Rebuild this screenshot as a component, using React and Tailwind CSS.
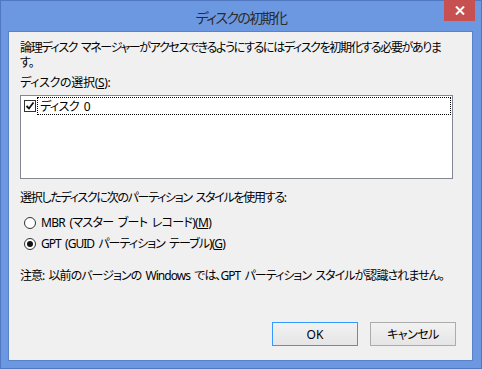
import React from "react";

const font = "font-['Noto_Sans','Noto_Sans_CJK_JP',sans-serif] [font-feature-settings:'palt']";

function Radio({ checked }) {
  return (
    <span className="w-[12px] h-[12px] rounded-full border border-[#333] bg-white flex items-center justify-center shrink-0">
      {checked && <span className="w-[6px] h-[6px] rounded-full bg-[#111]" />}
    </span>
  );
}

export default function App() {
  return (
    <div className={`w-[482px] h-[369px] bg-[#6b98e0] border border-[#4f78c0] flex flex-col ${font} text-[12px] text-black`}>
      <div className="relative h-[30px] flex items-center justify-center shrink-0">
        <span className="text-[14px] tracking-[-1.6px] text-[#2b2b2b] pt-[3px]">ディスクの初期化</span>
        <button className="absolute top-[-1px] right-[6px] w-[31px] h-[21px] bg-[#c75050] flex items-center justify-center">
          <svg width="10" height="9" viewBox="0 0 10 9">
            <path d="M1 0.5 L9 8.5 M9 0.5 L1 8.5" stroke="white" strokeWidth="2" />
          </svg>
        </button>
      </div>
      <div className="ml-[7px] mr-[8px] mb-[7px] flex-1 bg-[#f0f0f0] border border-[#5a82c8] flex flex-col pl-[11px] pr-[15px] pt-[8px] leading-[15px] whitespace-nowrap [word-spacing:2px]">
        <p className="tracking-[-1.35px]">論理ディスク マネージャーがアクセスできるようにするにはディスクを初期化する必要がありま</p>
        <p className="tracking-[-1px]">す。</p>
        <p className="mt-[5px] tracking-[-0.3px]">
          ディスクの選択(<span className="underline">S</span>):
        </p>
        <div className="mt-[5px] w-[433px] h-[84px] bg-white border border-[#828790] p-[1px] shrink-0">
          <div className="h-[18px] flex items-center">
            <span className="ml-[2px] w-[12px] h-[12px] border border-[#333] bg-white flex items-center justify-center shrink-0">
              <svg width="10" height="10" viewBox="0 0 10 10">
                <path d="M1.5 5 L4 7.5 L8.5 1.5" stroke="#111" strokeWidth="1.8" fill="none" />
              </svg>
            </span>
            <span className="ml-[1px] flex-1 h-[18px] border border-dotted border-black flex items-center pl-[2px] tracking-[-0.5px]">
              ディスク 0
            </span>
          </div>
        </div>
        <p className="mt-[11px] tracking-[-1.3px]">選択したディスクに次のパーティション スタイルを使用する:</p>
        <div className="mt-[7px] flex flex-col">
          <label className="h-[21px] flex items-center gap-[5px] pl-[4px]">
            <Radio />
            <span className="tracking-[-0.7px]">
              MBR (マスター ブート レコード)(<span className="underline">M</span>)
            </span>
          </label>
          <label className="h-[21px] flex items-center gap-[5px] pl-[4px]">
            <Radio checked />
            <span className="tracking-[-0.95px]">
              GPT (GUID パーティション テーブル)(<span className="underline">G</span>)
            </span>
          </label>
        </div>
        <p className="mt-[14px] tracking-[-0.95px]">
          注意: 以前のバージョンの Windows では、GPT パーティション スタイルが認識されません。
        </p>
        <div className="mt-auto mb-[14px] flex justify-end gap-[12px] pr-[1px]">
          <button className="w-[86px] h-[24px] border border-[#3399ff] bg-gradient-to-b from-[#f2f2f2] to-[#e5e5e5]">
            OK
          </button>
          <button className="w-[86px] h-[24px] border border-[#acacac] bg-gradient-to-b from-[#f2f2f2] to-[#e5e5e5] tracking-[-0.5px]">
            キャンセル
          </button>
        </div>
      </div>
    </div>
  );
}
